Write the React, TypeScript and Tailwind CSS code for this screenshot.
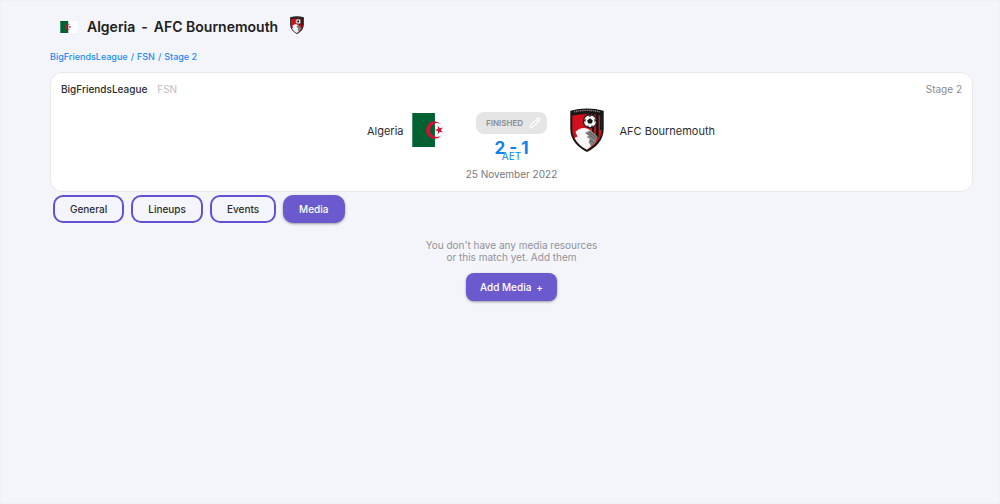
import React, { useState } from 'react';

const TABS = ['General', 'Lineups', 'Events', 'Media'];

const AlgeriaFlag: React.FC<{ className?: string }> = ({ className }) => (
  <svg viewBox="0 0 48 33" className={className} role="img" aria-label="Algeria flag">
    <rect width="48" height="33" fill="#fff" />
    <rect width="22" height="33" fill="#006233" />
    <path d="M28.6 11.7A8.4 8.4 0 1 0 28.6 21.3A6.7 6.7 0 1 1 28.6 11.7Z" fill="#d21034" />
    <path d="M21.8 16.5L24.8 15.5L24.8 12.4L26.7 14.9L29.6 14L27.8 16.5L29.6 19L26.7 18.1L24.8 20.6L24.8 17.5Z" fill="#d21034" />
  </svg>
);

const BournemouthCrest: React.FC<{ className?: string }> = ({ className }) => (
  <svg viewBox="0 0 34 44" className={className} role="img" aria-label="AFC Bournemouth crest">
    <path d="M0.3 2.8Q17-1.8 33.7 2.8V21C33.7 32 26 39.5 17 44C8 39.5 0.3 32 0.3 21Z" fill="#171717" />
    <path d="M2.3 7.6Q17 4.2 31.7 7.6V21C31.7 30.7 25.5 37.3 17 41.8C8.5 37.3 2.3 30.7 2.3 21Z" fill="#d3101d" />
    <path d="M4 3.9Q17 0.9 30 3.9" fill="none" stroke="#a38585" strokeWidth="1.3" strokeDasharray="1.2 0.7" />
    <path d="M22 6.2H24V25H22ZM26 6.3H28.6V29H26ZM30 7H31.7V22H30Z" fill="#171717" />
    <path d="M5.5 24C8.5 20.7 13 19 17 20.5L21 22.5L25 27L25.5 31L21 38.2L17 41.8C11.5 39 7 35 4.5 30L7.5 28.5Z" fill="#f7f7f7" />
    <path d="M15 25L20.5 22L27.5 28.5L25.7 34.5L21 38.8L18.7 34L20 31L16.5 29L19 27.7Z" fill="#858585" />
    <path d="M17 25.5L25.5 31M19 24L26.5 29.5M19.5 32L24 35" stroke="#4b4b4b" strokeWidth="0.7" />
    <circle cx="20" cy="13.2" r="6.6" fill="#fff" stroke="#171717" strokeWidth="1.2" />
    <path d="M20 10.3L22.8 12.4L21.8 15.6H18.2L17.2 12.4Z" fill="#171717" />
    <path d="M17.8 7.3H22.2L20 8.9ZM13.8 12L15.8 10.7L15.2 14.8ZM26.2 12L24.2 10.7L24.8 14.8ZM16 17.9L18.5 17.6L18.8 19.3ZM24 17.9L21.5 17.6L21.2 19.3Z" fill="#171717" />
  </svg>
);

const PencilIcon: React.FC = () => (
  <svg viewBox="0 0 12 12" className="size-3" fill="none" stroke="#fff" strokeWidth="1.2" strokeLinejoin="round" aria-hidden="true">
    <path d="M1 11L1.7 8.1L8.3 1.5C8.9 0.9 9.8 0.9 10.4 1.5C11 2.1 11 3 10.4 3.6L3.8 10.2ZM7.2 2.6L9.3 4.7" />
  </svg>
);

const App: React.FC = () => {
  const [activeTab, setActiveTab] = useState('Media');

  return (
    <main className="min-h-screen border border-[#f1f1f3] bg-[#f4f5fa] pl-[49px] pr-[26px] pt-3 font-['Inter',sans-serif] text-[#2b2b2d]">
      <header className="flex h-7 items-center pl-[10px]">
        <AlgeriaFlag className="h-3 w-[18px]" />
        <h1 className="ml-[9px] flex gap-[6px] text-[14px] font-semibold leading-5 text-[#202020]">
          <span>Algeria</span>
          <span>-</span>
          <span>AFC Bournemouth</span>
        </h1>
        <BournemouthCrest className="mb-1 ml-3 h-[18px] w-[14px]" />
      </header>

      <nav aria-label="Breadcrumb" className="mt-2 flex gap-[3px] text-[9px] font-medium leading-4 text-[#1b8bf2]">
        <a href="#league">BigFriendsLeague</a>
        <span>/</span>
        <a href="#season">FSN</a>
        <span>/</span>
        <a href="#stage">Stage 2</a>
      </nav>

      <section className="mt-[7px] h-[120px] rounded-xl border border-[#e9e9ec] bg-white px-[10px] pt-2">
        <div className="flex justify-between text-[10px] leading-4">
          <div className="flex gap-[10px]">
            <span className="font-medium">BigFriendsLeague</span>
            <span className="text-[#bdbdc2]">FSN</span>
          </div>
          <span className="text-[#8b8b92]">Stage 2</span>
        </div>

        <div className="mt-[11px] grid grid-cols-[1fr_100px_1fr]">
          <div className="flex h-11 items-center justify-end gap-2 text-[11px]">
            <span className="pt-[2px]">Algeria</span>
            <AlgeriaFlag className="h-[34px] w-[50px]" />
          </div>
          <div className="flex flex-col items-center pt-1">
            <button type="button" className="flex h-[22px] w-[71px] items-center justify-center gap-[6px] rounded-lg bg-[#e5e5e6] pl-1 text-[8px] font-semibold text-[#8b8b92]">
              FINISHED
              <PencilIcon />
            </button>
            <strong className="mt-1 text-[17px] font-bold leading-5 text-[#0d82f0]">2 - 1</strong>
            <span className="-mt-2 text-[10px] leading-3 text-[#0d82f0]">AET</span>
            <time dateTime="2022-11-25" className="mt-1 whitespace-nowrap text-[10px] leading-4 text-[#77777d]">25 November 2022</time>
          </div>
          <div className="flex h-11 items-center gap-2 text-[11px]">
            <BournemouthCrest className="h-11 w-[50px]" />
            <span className="pt-[2px]">AFC Bournemouth</span>
          </div>
        </div>
      </section>

      <div role="tablist" className="mt-[3px] flex gap-[7px] pl-[3px]">
        {TABS.map(tab => (
          <button
            key={tab}
            type="button"
            role="tab"
            aria-selected={activeTab === tab}
            onClick={() => setActiveTab(tab)}
            className={`h-7 rounded-[10px] text-[10px] font-medium ${
              activeTab === tab
                ? 'bg-[#6a5acd] px-4 text-white shadow-sm shadow-black/30'
                : 'border-2 border-[#6350d4] px-[15px] text-[#2b2b2d]'
            }`}
          >
            {tab}
          </button>
        ))}
      </div>

      <section className="mt-4 flex flex-col items-center text-center text-[10px] leading-3 text-[#929299]">
        <p>
          You don't have any media resources
          <br />
          or this match yet. Add them
        </p>
        <button type="button" className="mt-[10px] flex h-7 items-center gap-[5px] rounded-lg bg-[#6a5acd] px-[14px] font-medium text-white shadow-sm shadow-black/30">
          Add Media
          <span>+</span>
        </button>
      </section>
    </main>
  );
};

export default App;
